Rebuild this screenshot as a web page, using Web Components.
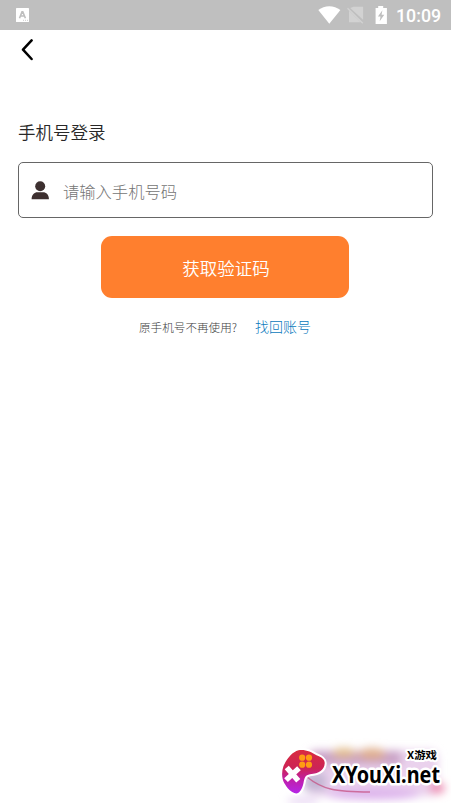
<!DOCTYPE html>
<html lang="zh-CN">
<head>
<meta charset="utf-8">
<title>手机号登录</title>
<style>
html,body{margin:0;height:100%;overflow:hidden;background:#fff}
body{font-family:"Noto Sans CJK SC",sans-serif;font-weight:300}
</style>
</head>
<body>
<login-screen></login-screen>
<script>
const define = (name, html) => customElements.define(name, class extends HTMLElement {
  constructor() {
    super();
    this.attachShadow({mode: "open"}).innerHTML = html;
  }
});

define("status-bar", `
<style>
:host{display:flex;align-items:center;height:30px;padding:0 10px 0 16px;box-sizing:border-box;background:#bfbfbf;color:#fff;font:500 17.800px/30px Roboto,sans-serif}
svg{display:block;flex:none}
.time{margin-left:8px;position:relative;top:1px;width:45px;white-space:nowrap}
</style>
<svg width="13" height="14" viewBox="0 0 13 14"><rect width="13" height="14" rx=".6" fill="#fff"/><path d="M3.500 10.200 6 3.900h.8l2.600 6.300M4.500 8h4" fill="none" stroke="#bfbfbf" stroke-width="1.600"/><path d="M7 12.300h5" stroke="#ccc" stroke-dasharray="1 1"/></svg>
<span style="flex:1"></span>
<svg width="70" height="20" viewBox="0 0 70 20">
<path d="M.3 5.100C6.500-.2 16-.2 22.400 5.100L11.300 18.700z" fill="#fff"/>
<path d="M35.500 1.800h9.600v13L32.200 2.900zM31 5.700 42.700 17.300H31z" fill="#d2d2d2"/><path d="M29.500 3.200 44.800 18.300" stroke="#d2d2d2" stroke-width="1.300"/>
<path d="M57.600 3h2.600V1h5v2h3.700V19H57.600z" fill="#fff"/><path d="M64.400 5.300 59.900 11.500h2.600L61.700 16.200l4.600-6.400H63.600z" fill="#bfbfbf"/>
</svg>
<span class="time">10:09</span>`);

define("nav-bar", `
<style>:host{display:flex;height:40px;padding:9px 0 0 21px;box-sizing:border-box}svg{display:block}</style>
<svg width="14" height="22" viewBox="0 0 14 22" role="img" aria-label="返回"><path d="M10.600 1.400 2 10.700 10.600 20" fill="none" stroke="#000" stroke-width="2.500" stroke-linecap="round" stroke-linejoin="round"/></svg>`);

define("phone-field", `
<style>
:host{display:flex;align-items:center;height:56px;box-sizing:border-box;border:1px solid #666;border-radius:5px;padding-left:12px;color:#757575;font-size:16.300px;line-height:24px}
svg{display:block;margin-right:14px}
span{position:relative;top:1px}
</style>
<svg width="18" height="19" viewBox="0 0 18 19"><circle cx="9.200" cy="5.200" r="5" fill="#3d3030"/><path d="M.600 18.200C.600 13.500 3.600 11.300 6.300 11.300h5.800c3.100 0 5.800 2.500 5.800 6.900z" fill="#3d3030"/></svg>
<span role="textbox"><slot></slot></span>`);

define("primary-button", `
<style>
:host{display:block;width:248px}
button{display:block;width:100%;height:62px;border:0;border-radius:11px;background:#ff7f2e;color:#fff;font:350 17.500px/26px "Noto Sans CJK SC",sans-serif;padding:2px 0 0 1px}
</style><button><slot></slot></button>`);

define("account-help", `
<style>
:host{display:flex;align-items:baseline;line-height:22px;font-size:11.600px;color:#404040}
a{font-size:14px;color:#0878bc;margin-left:18px}
</style><slot></slot><a><slot name="link"></slot></a>`);

define("site-mark", `
<style>:host{display:block;position:absolute;right:0;bottom:0;width:176px;height:65px}svg{display:block;overflow:visible}</style>
<svg width="176" height="65" viewBox="275 738 176 65">
<defs>
<linearGradient id="pad" x1="0" y1="0" x2="0" y2="1"><stop offset="0" stop-color="#d92c3f"/><stop offset=".42" stop-color="#cc2456"/><stop offset=".7" stop-color="#bf20ad"/><stop offset="1" stop-color="#b526e8"/></linearGradient>
<filter id="glow" x="-30%" y="-50%" width="160%" height="200%"><feGaussianBlur stdDeviation="4.500"/></filter>
</defs>
<g filter="url(#glow)">
<rect x="308" y="750" width="130" height="46" rx="8" fill="#ead2ed"/>
<rect x="311" y="751" width="90" height="14" fill="#c9a2c6"/>
<ellipse cx="344" cy="753" rx="12" ry="5" fill="#e2bc8c"/><ellipse cx="372" cy="754" rx="14" ry="6" fill="#dfae8d"/>
<rect x="304" y="773" width="22" height="18" fill="#c3b5d3"/>
<ellipse cx="373" cy="794" rx="48" ry="6" fill="#ddb4ec"/>
<ellipse cx="437" cy="788" rx="8" ry="6" fill="#ed91b5"/>
<ellipse cx="303" cy="801" rx="16" ry="4" fill="#ead9f4"/>
</g>
<path d="M307 777C322 789 334 792 370 792" fill="none" stroke="#c65082" stroke-width="1.500" opacity=".75"/>
<path d="M298.500 750.200C306 749.300 311 752 316.500 755.200C322 757.300 325 759.300 324.700 763.500C324.300 770 319 773.500 310 774.200C305 775 304.500 778 303.500 783C302.200 789 299.500 793.500 296.200 793.500C291.500 793 287 788 284.200 783C281.700 778 281.400 772 283.500 766C287 758.500 292 752 298.500 750.200Z" fill="url(#pad)" stroke="#fff" stroke-width="4" paint-order="stroke" stroke-linejoin="round"/>
<g fill="#ff9c13"><circle cx="302.200" cy="757.700" r="3.100"/><circle cx="309" cy="757.700" r="3.100"/><circle cx="302.200" cy="764.700" r="3.100"/><circle cx="309" cy="764.700" r="3.100"/></g>
<path d="M288.500 769.500 296.500 778.800M297 770 288 778.300" stroke="#fff" stroke-width="5.400" stroke-linecap="square"/>
<g fill="#000" stroke="#fff" paint-order="stroke" stroke-linejoin="round" font-weight="700">
<text x="407" y="759.300" font-family="'Noto Sans CJK SC',sans-serif" font-size="10.700" stroke-width="4" textLength="30" lengthAdjust="spacingAndGlyphs">X游戏</text>
<text transform="translate(332 783) scale(.818 1)" font-family="'Noto Sans',sans-serif" font-size="24" stroke-width="5" textLength="132" lengthAdjust="spacingAndGlyphs">XYouXi.net</text>
</g>
</svg>`);

define("login-screen", `
<style>
:host{display:flex;flex-direction:column;position:relative;height:803px;max-width:451px;background:#fff;overflow:hidden}
main{display:flex;flex-direction:column;padding:49px 18px 0}
h1{margin:0;font-size:17.500px;font-weight:350;line-height:26px;color:#282828}
phone-field{margin-top:17px}
primary-button{margin:18px 0 0 83.400px}
account-help{margin:17px 0 0 121px}
</style>
<status-bar></status-bar><nav-bar></nav-bar>
<main><h1>手机号登录</h1><phone-field>请输入手机号码</phone-field><primary-button>获取验证码</primary-button>
<account-help>原手机号不再使用?<span slot="link">找回账号</span></account-help></main>
<site-mark></site-mark>`);
</script>
</body>
</html>
